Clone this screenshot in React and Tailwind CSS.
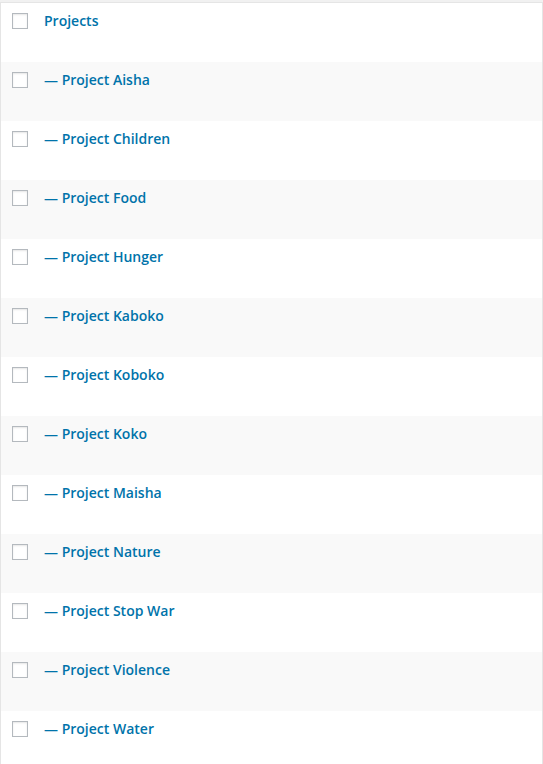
const terms = [
  'Projects',
  '— Project Aisha',
  '— Project Children',
  '— Project Food',
  '— Project Hunger',
  '— Project Kaboko',
  '— Project Koboko',
  '— Project Koko',
  '— Project Maisha',
  '— Project Nature',
  '— Project Stop War',
  '— Project Violence',
  '— Project Water',
]

export default function App() {
  return (
    <div className="min-h-screen bg-[#f1f1f1] pt-[2px]" style={{ fontFamily: '"Open Sans", sans-serif' }}>
      <div className="border border-[#e5e5e5] bg-white">
        {terms.map((name, i) => (
          <div
            key={name}
            className={`flex h-[59px] items-start ${i % 2 === 1 ? 'bg-[#f9f9f9]' : 'bg-white'}`}
          >
            <span className="ml-[11px] mt-[10px] block h-[16px] w-[16px] border border-[#b4b9be] bg-white shadow-[inset_0_1px_2px_rgba(0,0,0,0.1)]" />
            <a href="#" className="ml-[16px] mt-[8px] text-[14px] font-semibold leading-[20px] text-[#0073aa]">
              {name}
            </a>
          </div>
        ))}
      </div>
    </div>
  )
}
